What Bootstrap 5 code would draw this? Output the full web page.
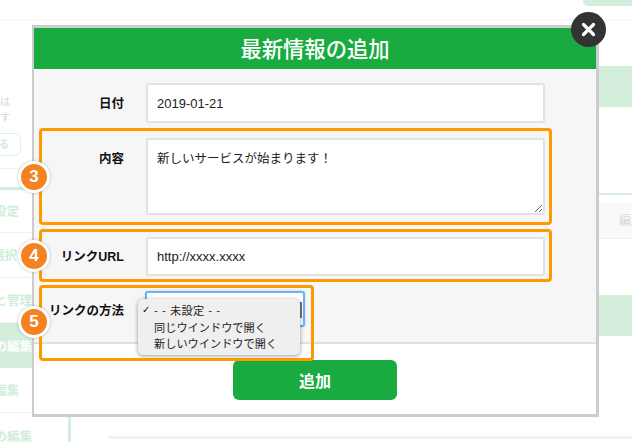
<!DOCTYPE html>
<html lang="ja">
<head>
  <meta charset="UTF-8">
  <title>最新情報の追加</title>
  <link href="https://cdn.jsdelivr.net/npm/bootstrap@5.3.0/dist/css/bootstrap.min.css" rel="stylesheet">
  <style>
    html, body { margin: 0; background: #fff; }
    body { font-family: "Liberation Sans", "Noto Sans CJK JP", sans-serif; }

    .page-wrap { position: relative; width: 632px; height: 442px; overflow: hidden; }

    /* faded page behind the dialog */
    .top-strip { height: 19px; border-bottom: 2px solid #f7f7f7; box-sizing: content-box; }
    .top-pill { width: 49px; height: 6px; background: #d3eedb; border-radius: 0 0 0 5px; }
    .side-col { width: 71px; height: 423px; flex-shrink: 0; color: #cfeeda; font-size: 12.5px; font-weight: 700; overflow: hidden; }
    .side-note { padding-top: 73px; font-size: 10px; font-weight: 400; color: #d4d4d4; line-height: 16px; }
    .side-note div { width: 10px; text-align: right; white-space: nowrap; }
    .side-btn { width: 34px; height: 23px; margin: 7px 0 0 -13px; border: 1px solid #dcf3e4; border-radius: 6px; color: #cfeeda; font-size: 10px; text-align: right; padding-right: 11px; line-height: 21px; }
    .side-rule { height: 1px; background: #f1f1f1; margin-top: 12px; }
    .side-item { height: 45px; display: flex; align-items: center; justify-content: flex-end; padding-top: 3px; padding-right: 39px; white-space: nowrap; border-bottom: 1px solid #f1f1f1; }
    .side-item.first { height: 46px; border-top: 3px solid #d3eedb; margin-top: 18px; padding-right: 52px; }
    .side-item.short { padding-right: 54px; }
    .side-item.mid { padding-right: 52px; }
    .side-item.on { background: #d3eedb; color: #fff; border: 0; }
    .side-item.last { border-bottom: 0; border-right: 3px solid #d3eedb; padding-right: 36px; }
    .main-col { flex: 1; min-width: 0; padding-left: 37px; }
    .pale-block { height: 41px; background: #d3eedb; margin-top: 45px; }
    .pale-line { height: 2px; background: #d3eedb; margin-top: 86px; }
    .pale-row { height: 36px; background: #f9f9f9; margin-top: 8px; border-bottom: 1px solid #f1f1f1; color: #d8d8d8; font-size: 12px; line-height: 36px; padding-left: 511px; white-space: nowrap; overflow: hidden; }
    .pale-block.low { margin-top: 56px; }
    .pale-foot { height: 3px; background: #f2f2f2; margin-top: 100px; }

    /* dialog */
    .add-dialog { position: absolute; left: 32px; top: 25px; width: 567px; height: 392px; border: 3px solid #ccc; border-left-width: 2px; background: #fff; }
    .add-head { height: 42px; background: #1aab40; border-bottom: 1px solid #fff; color: #fff; font-size: 21.3px; font-weight: 500; line-height: 40px; text-align: center; font-family: "Noto Sans CJK JP", sans-serif; }
    .add-body { height: 274px; background: #f6f6f6; border-bottom: 2px solid #e0e0e0; padding-top: 13px; }
    .add-row { margin-bottom: 15px; }
    .add-row.url { margin-top: 22px; }
    .add-label { width: 90px; margin-right: 22px; flex-shrink: 0; text-align: right; font-size: 12.5px; font-weight: 700; color: #111; padding-top: 2px; }
    .add-label.top { padding-top: 12px; }
    .add-label.mid { padding-top: 1px; }
    .add-label.low { padding-top: 4px; }
    .add-input { width: 399px; height: 40px; border: 2px solid #e2e2e2; border-radius: 2px; padding: 0 9px; font-size: 13px; color: #222; box-shadow: none; }
    .add-input.url-box { height: 39px; }
    textarea.add-input { height: 77px; padding-top: 10px; font-size: 12.5px; line-height: 18px; }
    .add-select { width: 160px; height: 36px; margin-left: -1px; border: 2px solid #6fb1f0; border-radius: 3px; background-color: #fff; background-image: none; box-shadow: 0 0 2px #8fc4f5; }
    .add-foot { padding-top: 16px; }
    .add-btn { width: 164px; height: 40px; background: #1aab40; border: 0; border-radius: 6px; color: #fff; font-size: 16px; font-weight: 700; font-family: "Noto Sans CJK JP", sans-serif; padding: 0; }
    .add-btn:hover { background: #1aab40; color: #fff; }

    /* native select popup */
    .pick-menu { position: absolute; left: 138px; top: 299px; width: 162px; height: 56px; padding: 3px 0; background: #efefef; border-radius: 5px; box-shadow: 0 1px 4px rgba(0, 0, 0, .4); font-size: 11.2px; line-height: 16.5px; color: #222; font-family: "Noto Sans CJK JP", sans-serif; }
    .pick-menu div { padding-left: 16px; position: relative; white-space: nowrap; }
    .pick-menu .pick-dash { word-spacing: 1px; letter-spacing: .3px; }
    .pick-tick { position: absolute; left: 4px; top: 0; font-size: 10px; font-weight: 700; color: #111; font-family: "DejaVu Sans", sans-serif; }
    .pick-bar { position: absolute; left: 299px; top: 302px; width: 3px; height: 16px; background: #777; }

    /* annotations */
    .note-box { position: absolute; border: 3px solid #f90; border-radius: 4px; }
    .note-3 { left: 39px; top: 128px; width: 513px; height: 97px; }
    .note-4 { left: 39px; top: 229px; width: 513px; height: 53px; }
    .note-5 { left: 39px; top: 285px; width: 275px; height: 76px; }
    .note-num { position: absolute; left: 18px; width: 32px; height: 32px; border: 3px solid #fff; border-radius: 50%; background: #f58220; color: #fff; font-size: 17px; font-weight: 700; line-height: 26px; text-align: center; box-shadow: 0 0 3px rgba(0, 0, 0, .25); }
    .num-3 { top: 161px; }
    .num-4 { top: 240px; }
    .num-5 { top: 306px; }
    .close-dot { position: absolute; left: 571px; top: 12px; width: 35px; height: 35px; border-radius: 50%; background: #333; display: flex; align-items: center; justify-content: center; }
  </style>
</head>
<body>

<div class="page-wrap">
  <!-- page behind -->
  <div class="top-strip d-flex justify-content-end"><div class="top-pill"></div></div>
  <div class="d-flex">
    <div class="side-col">
      <div class="side-note">
        <div>は</div>
        <div>す</div>
      </div>
      <div class="side-btn">る</div>
      <div class="side-rule"></div>
      <div class="side-item first">設定</div>
      <div class="side-item short">選択</div>
      <div class="side-item">と管理</div>
      <div class="side-item on">の編集</div>
      <div class="side-item mid">編集</div>
      <div class="side-item last">の編集</div>
    </div>
    <div class="main-col">
      <div class="pale-block"></div>
      <div class="pale-line"></div>
      <div class="pale-row">編集</div>
      <div class="pale-block low"></div>
      <div class="pale-foot"></div>
    </div>
  </div>

  <!-- dialog -->
  <div class="add-dialog">
    <div class="add-head">最新情報の追加</div>
    <form class="add-body">
      <div class="add-row d-flex align-items-center">
        <label class="add-label">日付</label>
        <input class="form-control add-input" type="text" value="2019-01-21">
      </div>
      <div class="add-row d-flex align-items-start">
        <label class="add-label top">内容</label>
        <textarea class="form-control add-input">新しいサービスが始まります！</textarea>
      </div>
      <div class="add-row url d-flex align-items-center">
        <label class="add-label mid">リンクURL</label>
        <input class="form-control add-input url-box" type="text" value="http://xxxx.xxxx">
      </div>
      <div class="add-row d-flex align-items-center">
        <label class="add-label low">リンクの方法</label>
        <select class="form-select add-select"></select>
      </div>
    </form>
    <div class="add-foot d-flex justify-content-center">
      <button class="btn add-btn" type="button">追加</button>
    </div>
  </div>

  <div class="pick-bar"></div>
  <div class="pick-menu">
    <div class="pick-dash"><span class="pick-tick">✓</span>- - 未設定 - -</div>
    <div>同じウインドウで開く</div>
    <div>新しいウインドウで開く</div>
  </div>

  <div class="note-box note-3"></div>
  <div class="note-box note-4"></div>
  <div class="note-box note-5"></div>
  <div class="note-num num-3">3</div>
  <div class="note-num num-4">4</div>
  <div class="note-num num-5">5</div>

  <div class="close-dot">
    <svg width="15" height="15" viewBox="0 0 15 15"><path d="M2.5 2.5l10 10M12.5 2.5l-10 10" stroke="#fff" stroke-width="3.2" stroke-linecap="round" fill="none"/></svg>
  </div>
</div>

<script src="https://cdn.jsdelivr.net/npm/bootstrap@5.3.0/dist/js/bootstrap.bundle.min.js"></script>
</body>
</html>
